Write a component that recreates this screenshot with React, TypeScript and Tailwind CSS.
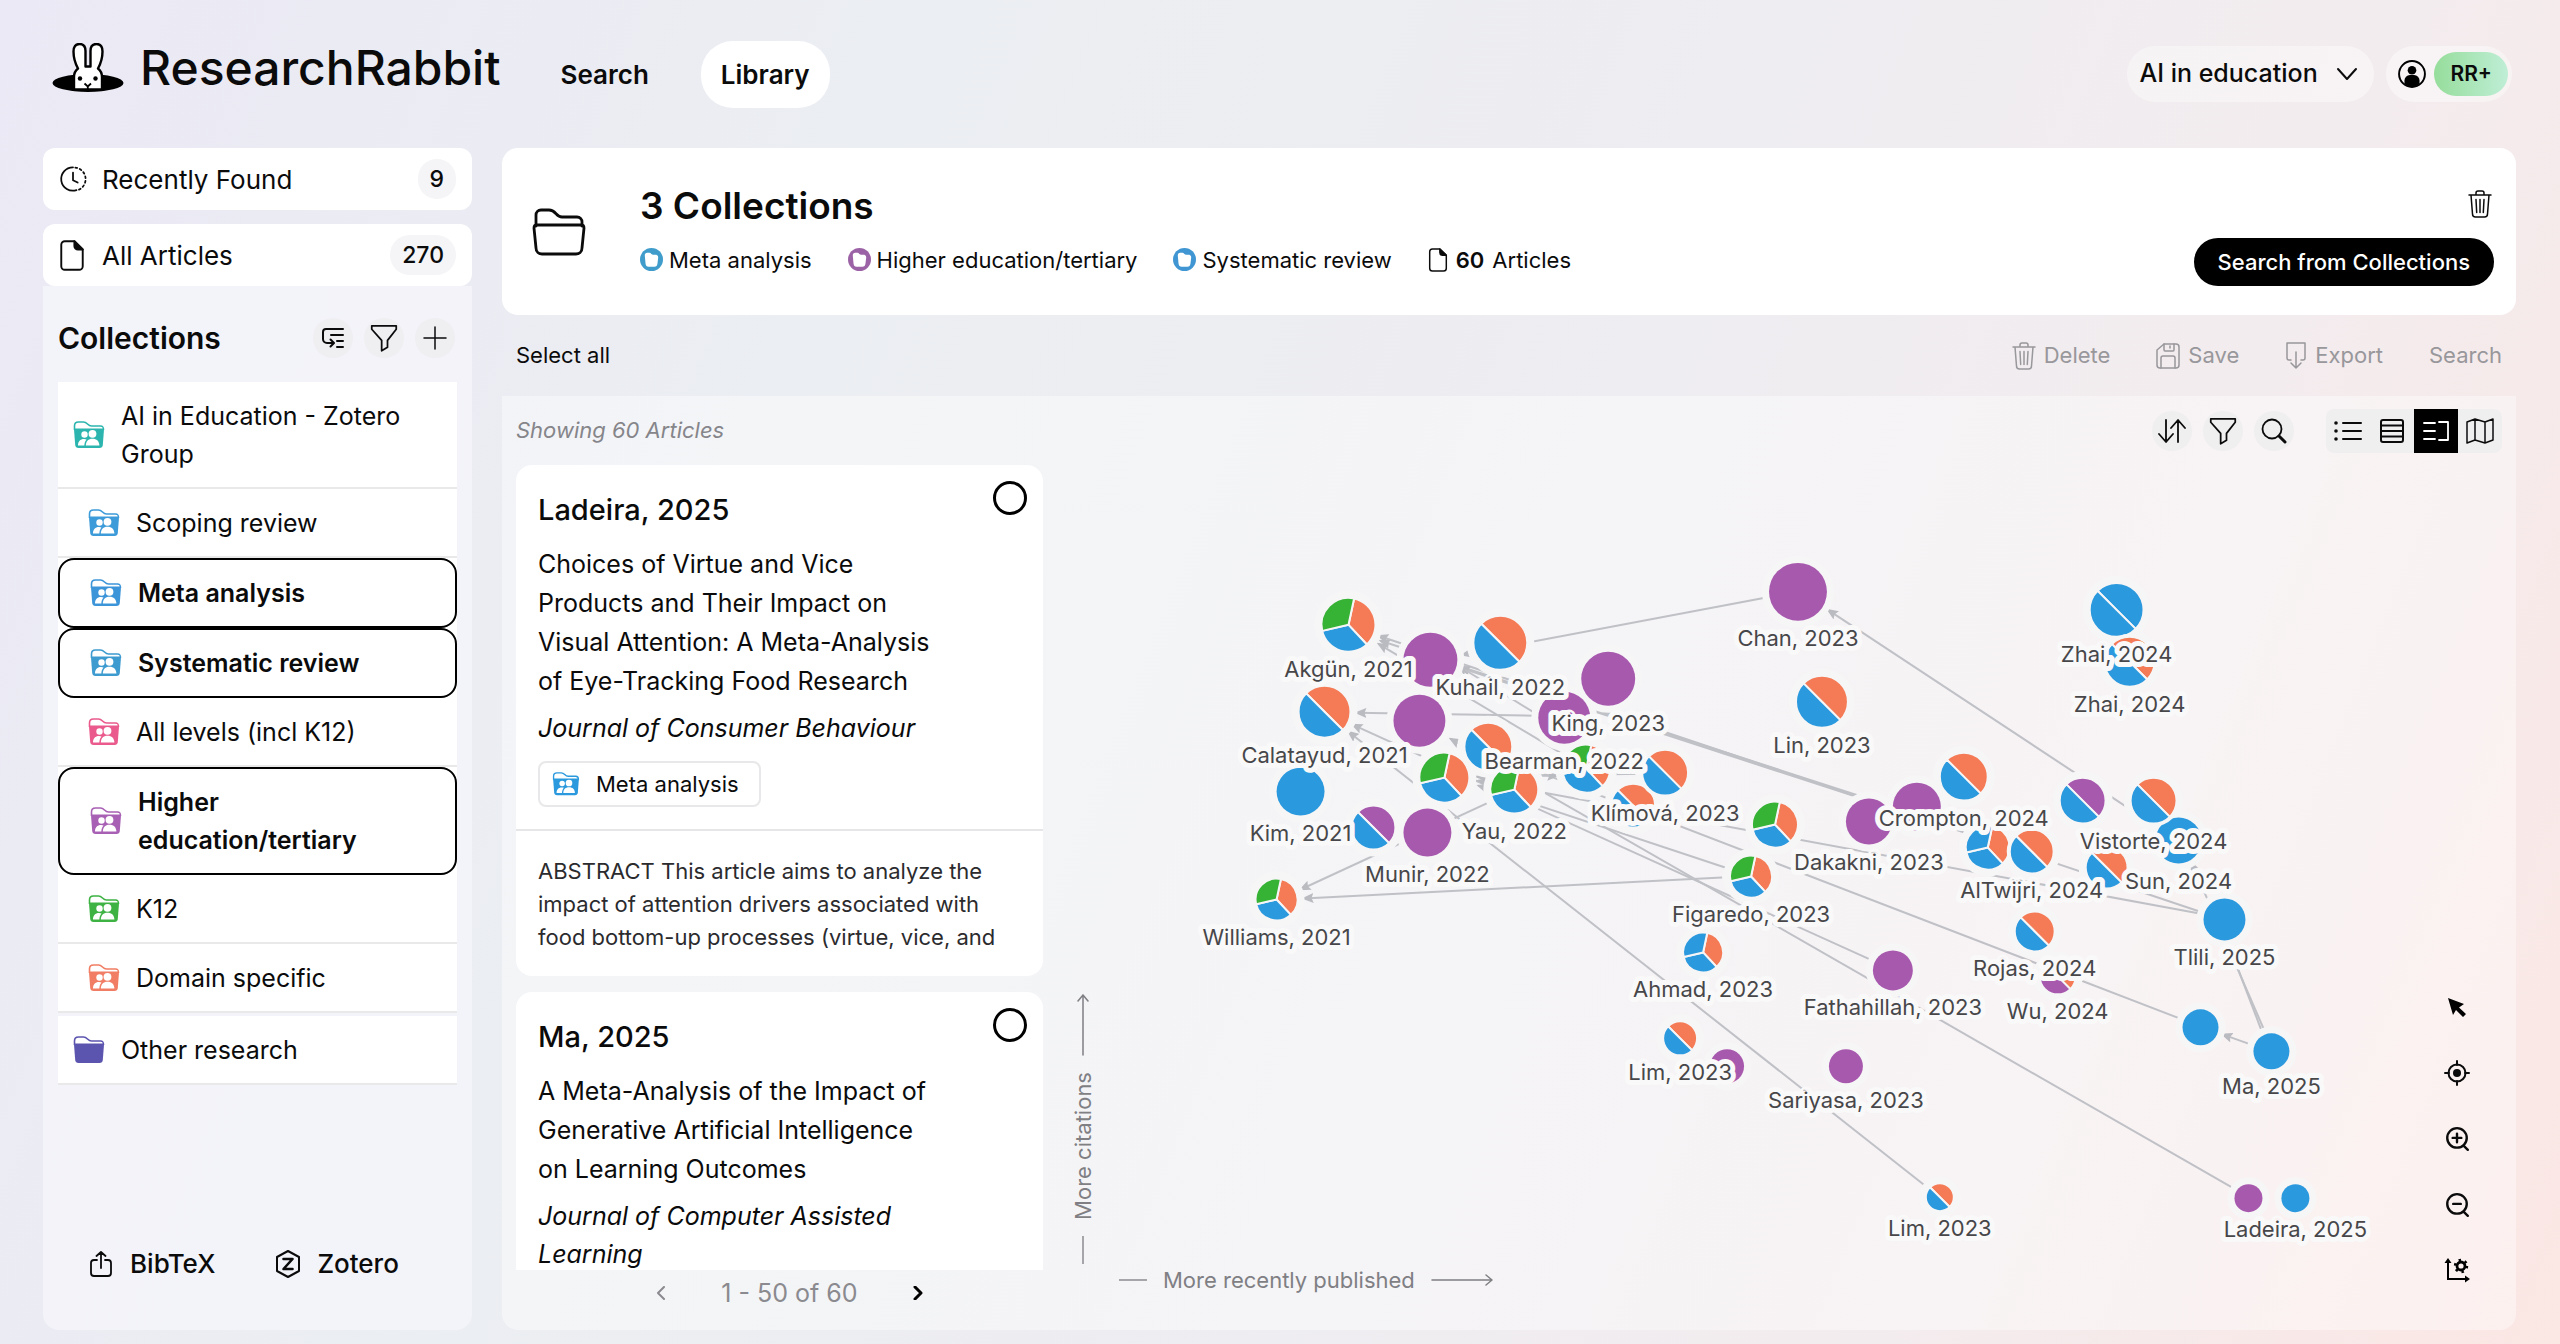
import React from 'react';
import { clsx } from 'clsx';

type IconProps = { className?: string };

type StrokeIconProps = IconProps & {
  box?: string;
  width?: number;
  children: React.ReactNode;
};

function StrokeIcon({ className, box = '0 0 24 24', width = 1.5, children }: StrokeIconProps) {
  return (
    <svg
      className={clsx('shrink-0', className)}
      viewBox={box}
      fill="none"
      stroke="currentColor"
      strokeWidth={width}
      strokeLinecap="round"
      strokeLinejoin="round"
      aria-hidden="true"
    >
      {children}
    </svg>
  );
}

/* ---------- Icons ---------- */

const RabbitLogo = ({ className }: IconProps) => (
  <svg className={className} viewBox="0 0 72 50" aria-hidden="true">
    <ellipse cx="36" cy="40" rx="35.500" ry="9" fill="#000" />
    <path
      d="M22 46.500V34c0-4 1.500-6.500 4-8.500C23 20 21.500 14 21.500 8.500 21.500 4 23.500 1 27.500 1 32 1 33.500 4 33.500 8v15.500h5V8c0-4 1.500-7 6-7 4 0 6 3 6 7.500 0 5.500-1.500 11.500-4.500 17 2.500 2 4 4.500 4 8.500v12.500z"
      fill="#fff"
      stroke="#000"
      strokeWidth="2.400"
      strokeLinejoin="round"
    />
    <circle cx="28" cy="35.500" r="2.200" fill="#000" />
    <circle cx="43.500" cy="35.500" r="2.200" fill="#000" />
    <path d="M32.500 40.500l3.300 3 3.200-3M35.800 43.500V47" fill="none" stroke="#000" strokeWidth="1.800" />
  </svg>
);

const ClockIcon = ({ className }: IconProps) => (
  <StrokeIcon className={className}>
    <path d="M12 2a10 10 0 1 0 3 19.500" />
    <path d="M14 2.200a10 10 0 0 1 3 19" strokeDasharray="1.600 2.400" />
    <path d="M12 6.500V13l4 2" />
  </StrokeIcon>
);

const FileIcon = ({ className }: IconProps) => (
  <StrokeIcon className={className} box="0 0 20 26" width={1.6}>
    <path d="M4 1h8l7 7v14a3 3 0 0 1-3 3H4a3 3 0 0 1-3-3V4a3 3 0 0 1 3-3z" />
    <path d="M12 1v4a3 3 0 0 0 3 3h4z" fill="currentColor" />
  </StrokeIcon>
);

const TreeIcon = ({ className }: IconProps) => (
  <StrokeIcon className={className} width={2}>
    <path d="M22 3H5a3 3 0 0 0-3 3v7a4 4 0 0 0 4 4h6M9.500 13.500L13 17l-3.500 3.500M10 9h12M16 15h6M16 21h6" />
  </StrokeIcon>
);

const FilterIcon = ({ className }: IconProps) => (
  <StrokeIcon className={className}>
    <path d="M1.500 1.500h21v3L15 14v6l-5 3v-9L1.500 4.500z" />
  </StrokeIcon>
);

const PlusIcon = ({ className }: IconProps) => (
  <StrokeIcon className={className}>
    <path d="M12 1v22M1 12h22" />
  </StrokeIcon>
);

const FolderIcon = ({ className }: IconProps) => (
  <StrokeIcon className={className} box="0 0 54 48" width={2.8}>
    <path d="M4 18V7c0-3 2-5 5-5h8c7 0 7 7 13 7h15c3 0 5 2 5 5v4" />
    <path d="M5 17h44c2 0 3 1 3 3l-2 20c0 4-3 6-6 6H10c-3 0-6-2-6-6L2 20c0-2 1-3 3-3z" />
  </StrokeIcon>
);

const TrashIcon = ({ className }: IconProps) => (
  <StrokeIcon className={className} box="0 0 24 28">
    <path d="M1 5h22M8 5V3a2 2 0 0 1 2-2h4a2 2 0 0 1 2 2v2M3 5l1.500 19a3 3 0 0 0 3 3h9a3 3 0 0 0 3-3L21 5M8 9.500l.700 13M12 9.500v13M16 9.500l-.700 13" />
  </StrokeIcon>
);

const SaveIcon = ({ className }: IconProps) => (
  <StrokeIcon className={className} box="0 0 24 26">
    <path d="M8 1h12a3 3 0 0 1 3 3v18a3 3 0 0 1-3 3H4a3 3 0 0 1-3-3V7z" />
    <path d="M8 1v6a1 1 0 0 0 1 1h8a1 1 0 0 0 1-1V1M5 25V15a2 2 0 0 1 2-2h10a2 2 0 0 1 2 2v10M14 3v2" />
  </StrokeIcon>
);

const ExportIcon = ({ className }: IconProps) => (
  <StrokeIcon className={className} box="0 0 22 28">
    <path d="M6 18H4a2 2 0 0 1-2-2V1h18v15a2 2 0 0 1-2 2h-2M11 10v16M6 21l5 5 5-5" />
  </StrokeIcon>
);

const ShareIcon = ({ className }: IconProps) => (
  <StrokeIcon className={className} box="0 0 22 26" width={1.8}>
    <path d="M7 9H4a3 3 0 0 0-3 3v10a3 3 0 0 0 3 3h14a3 3 0 0 0 3-3V12a3 3 0 0 0-3-3h-3M11 17V1M6.500 5L11 1l4.500 4" />
  </StrokeIcon>
);

const ZoteroIcon = ({ className }: IconProps) => (
  <StrokeIcon className={className} box="0 0 26 28" width={2}>
    <path d="M13 1l11 6v14l-11 6-11-6V7z" />
    <path d="M8.500 9h9l-9 10h9" strokeWidth="2.600" />
  </StrokeIcon>
);

const UserIcon = ({ className }: IconProps) => (
  <svg className={className} viewBox="0 0 26 26" aria-hidden="true">
    <circle cx="13" cy="13" r="12" fill="none" stroke="#000" strokeWidth="1.800" />
    <circle cx="13" cy="9.500" r="4" fill="#000" />
    <path d="M6 22v-3a5 5 0 0 1 5-5h4a5 5 0 0 1 5 5v3c-4 4-10 4-14 0z" fill="#000" />
  </svg>
);

const SortIcon = ({ className }: IconProps) => (
  <StrokeIcon className={className} box="0 0 28 26" width={1.8}>
    <path d="M8 2v21M1 16l7 8 7-8M20 24V3M13 10l7-8 7 8" />
  </StrokeIcon>
);

const SearchIcon = ({ className }: IconProps) => (
  <StrokeIcon className={className} box="0 0 26 26" width={1.8}>
    <circle cx="11" cy="11" r="9.500" />
    <path d="M18 18l6 6" strokeWidth="3" />
  </StrokeIcon>
);

const ListIcon = ({ className }: IconProps) => (
  <StrokeIcon className={className} box="0 0 28 24" width={2}>
    <path d="M9 4h18M9 12h18M9 20h18" />
    <path d="M2 4h.010M2 12h.010M2 20h.010" strokeWidth="3.600" />
  </StrokeIcon>
);

const TableIcon = ({ className }: IconProps) => (
  <StrokeIcon className={className} width={2}>
    <rect x="1" y="1" width="22" height="22" rx="2" />
    <path d="M1 6.500h22M1 12h22M1 17.500h22" />
  </StrokeIcon>
);

const SplitIcon = ({ className }: IconProps) => (
  <StrokeIcon className={className} box="0 0 28 24" width={1.8}>
    <path d="M2 4h11M2 12h11M2 20h11M17 3h9v18h-9" />
  </StrokeIcon>
);

const MapIcon = ({ className }: IconProps) => (
  <StrokeIcon className={className} box="0 0 28 28">
    <path d="M1 5l8-3 10 3 8-3v21l-8 3-10-3-8 3zM9 2v21M19 5v21" />
  </StrokeIcon>
);

const TargetIcon = ({ className }: IconProps) => (
  <StrokeIcon className={className} box="0 0 26 26" width={2}>
    <circle cx="13" cy="13" r="8.500" />
    <circle cx="13" cy="13" r="4" fill="currentColor" stroke="none" />
    <path d="M13 1v4M13 21v4M1 13h4M21 13h4" />
  </StrokeIcon>
);

const CursorIcon = ({ className }: IconProps) => (
  <svg className={className} viewBox="0 0 20 20" aria-hidden="true">
    <path d="M1 1l16 6-5 3.500 7 6.500-3 3-7-7-3 5z" fill="#000" />
  </svg>
);

const ZoomInIcon = ({ className }: IconProps) => (
  <StrokeIcon className={className} width={2.2}>
    <circle cx="12" cy="11" r="9" />
    <path d="M18.500 18.500L22 22M8 11h8M12 7v8" />
  </StrokeIcon>
);

const ZoomOutIcon = ({ className }: IconProps) => (
  <StrokeIcon className={className} width={2.2}>
    <circle cx="12" cy="11" r="9" />
    <path d="M18.500 18.500L22 22M8.500 11h7" />
  </StrokeIcon>
);

const AxisIcon = ({ className }: IconProps) => (
  <svg className={className} viewBox="0 0 26 26" aria-hidden="true">
    <path d="M4 4v17h18" fill="none" stroke="#000" strokeWidth="2" />
    <path d="M4 0l3.500 5h-7zM26 21l-5 3.500v-7z" fill="#000" />
    <circle cx="17" cy="8" r="4" fill="none" stroke="#000" strokeWidth="2.800" />
    <circle cx="17" cy="8" r="6" fill="none" stroke="#000" strokeWidth="2.400" strokeDasharray="2.400 3.880" />
  </svg>
);

const ChevronIcon = ({ className }: IconProps) => (
  <StrokeIcon className={className} box="0 0 22 14" width={2}>
    <path d="M2 2l9 10 9-10" />
  </StrokeIcon>
);

type CollectionFolderProps = IconProps & { color: string; shared?: boolean };

function CollectionFolder({ className, color, shared = true }: CollectionFolderProps) {
  return (
    <svg className={clsx('shrink-0', className)} viewBox="0 0 32 28" aria-hidden="true">
      <path
        d="M1.500 9V5c0-2.500 1-4 4-4h5c4 0 4 4 8 4h9c2.500 0 3 1 3 4"
        fill="#fff"
        stroke={color}
        strokeWidth="1.600"
      />
      <path
        d="M2 7.500h28c.700 0 1 .300 1 1L29.800 24c-.200 2-1.300 3-3.300 3h-21c-2 0-3.100-1-3.300-3L1 8.500c0-.700.300-1 1-1z"
        fill={color}
      />
      {shared && (
        <g fill="#fff">
          <circle cx="11.500" cy="13.500" r="3.200" />
          <path d="M5 24.500c0-4 2.200-6.500 6-6.500 1 0 1.800.200 2.500.500-1.300 1.500-2 3.300-2.200 6z" />
          <circle cx="19.500" cy="12.800" r="3.900" />
          <path d="M12.800 24.500c.200-4.300 2.400-6.800 6.700-6.800s6.700 2.500 6.900 6.800z" />
        </g>
      )}
    </svg>
  );
}

const FolderBadge = ({ color }: { color: string }) => (
  <svg className="size-[23px] shrink-0" viewBox="0 0 24 24" aria-hidden="true">
    <circle cx="12" cy="12" r="12" fill={color} />
    <path d="M5 8c0-2 1-3 2.500-3H10c1.500 0 1.500 2 3.500 2H16c2 0 3 1 3 3l-.800 6.500c-.300 2-1.200 3-3.200 3H9c-2 0-2.900-1-3.200-3z" fill="#fff" />
  </svg>
);

/* ---------- Data ---------- */

const BLUE = '#2b99dd';
const ORANGE = '#f47b55';
const GREEN = '#36b235';
const PURPLE = '#a759ae';

const collections = [
  { name: 'AI in Education - Zotero Group', color: '#2cb5ae', nested: false },
  { name: 'Scoping review', color: '#3d9bd9', nested: true },
  { name: 'Meta analysis', color: '#3d95d9', nested: true, selected: true },
  { name: 'Systematic review', color: '#3d9bd0', nested: true, selected: true },
  { name: 'All levels (incl K12)', color: '#ea5a8c', nested: true },
  { name: 'Higher education/tertiary', color: '#a860b4', nested: true, selected: true },
  { name: 'K12', color: '#3eb344', nested: true },
  { name: 'Domain specific', color: '#f17d64', nested: true },
  { name: 'Other research', color: '#5c55b0', nested: false, plain: true },
];

const selectedTags = [
  { name: 'Meta analysis', color: '#3f9ccb' },
  { name: 'Higher education/tertiary', color: '#9c62a6' },
  { name: 'Systematic review', color: '#3f96d2' },
];

const articles = [
  {
    id: 'ladeira',
    label: 'Ladeira, 2025',
    title: 'Choices of Virtue and Vice Products and Their Impact on Visual Attention: A Meta-Analysis of Eye-Tracking Food Research',
    journal: 'Journal of Consumer Behaviour',
    tag: 'Meta analysis',
    abstract:
      'ABSTRACT This article aims to analyze the impact of attention drivers associated with food bottom-up processes (virtue, vice, and',
  },
  {
    id: 'ma',
    label: 'Ma, 2025',
    title: 'A Meta-Analysis of the Impact of Generative Artificial Intelligence on Learning Outcomes',
    journal: 'Journal of Computer Assisted Learning',
  },
];

type GraphNode = { x: number; y: number; r: number; fill: string[]; label?: string };

const BO = [ORANGE, BLUE];
const OBG = [ORANGE, BLUE, GREEN];
const OBB = [ORANGE, BLUE, BLUE];

const nodes: GraphNode[] = [
  { x: 1348, y: 624, r: 27, fill: OBG, label: 'Akgün, 2021' },
  { x: 1430, y: 659, r: 27, fill: [PURPLE] },
  { x: 1500, y: 642, r: 27, fill: BO, label: 'Kuhail, 2022' },
  { x: 1324, y: 711, r: 26, fill: BO, label: 'Calatayud, 2021' },
  { x: 1419, y: 720, r: 26, fill: [PURPLE] },
  { x: 1564, y: 717, r: 26, fill: [PURPLE], label: 'Bearman, 2022' },
  { x: 1608, y: 678, r: 27, fill: [PURPLE], label: 'King, 2023' },
  { x: 1488, y: 746, r: 24, fill: BO },
  { x: 1444, y: 777, r: 25, fill: OBG },
  { x: 1514, y: 789, r: 24, fill: OBG, label: 'Yau, 2022' },
  { x: 1586, y: 768, r: 24, fill: OBG },
  { x: 1633, y: 805, r: 22, fill: BO },
  { x: 1665, y: 772, r: 23, fill: BO, label: 'Klímová, 2023' },
  { x: 1300, y: 791, r: 24, fill: [BLUE], label: 'Kim, 2021' },
  { x: 1373, y: 827, r: 22, fill: [PURPLE, BLUE] },
  { x: 1427, y: 832, r: 24, fill: [PURPLE], label: 'Munir, 2022' },
  { x: 1276, y: 899, r: 21, fill: OBG, label: 'Williams, 2021' },
  { x: 1798, y: 591, r: 29, fill: [PURPLE], label: 'Chan, 2023' },
  { x: 1822, y: 701, r: 26, fill: BO, label: 'Lin, 2023' },
  { x: 2117, y: 609, r: 27, fill: [BLUE, BLUE], label: 'Zhai, 2024' },
  { x: 2130, y: 661, r: 25, fill: BO, label: 'Zhai, 2024' },
  { x: 1964, y: 776, r: 24, fill: BO, label: 'Crompton, 2024' },
  { x: 1917, y: 806, r: 24, fill: [PURPLE] },
  { x: 1869, y: 821, r: 23, fill: [PURPLE], label: 'Dakakni, 2023' },
  { x: 1775, y: 824, r: 23, fill: OBG },
  { x: 1751, y: 876, r: 21, fill: OBG, label: 'Figaredo, 2023' },
  { x: 1703, y: 952, r: 20, fill: OBB, label: 'Ahmad, 2023' },
  { x: 1893, y: 970, r: 20, fill: [PURPLE], label: 'Fathahillah, 2023' },
  { x: 1988, y: 847, r: 22, fill: OBB },
  { x: 2032, y: 851, r: 22, fill: BO, label: 'AlTwijri, 2024' },
  { x: 2083, y: 800, r: 23, fill: [PURPLE, BLUE] },
  { x: 2107, y: 867, r: 21, fill: BO },
  { x: 2179, y: 840, r: 23, fill: [BLUE], label: 'Sun, 2024' },
  { x: 2154, y: 800, r: 23, fill: BO, label: 'Vistorte, 2024' },
  { x: 2058, y: 976, r: 18, fill: [ORANGE, PURPLE], label: 'Wu, 2024' },
  { x: 2035, y: 931, r: 20, fill: BO, label: 'Rojas, 2024' },
  { x: 2225, y: 919, r: 21, fill: [BLUE], label: 'Tlili, 2025' },
  { x: 2201, y: 1027, r: 18, fill: [BLUE] },
  { x: 2272, y: 1051, r: 18, fill: [BLUE], label: 'Ma, 2025' },
  { x: 1727, y: 1066, r: 17, fill: [PURPLE] },
  { x: 1680, y: 1038, r: 17, fill: BO, label: 'Lim, 2023' },
  { x: 1846, y: 1066, r: 17, fill: [PURPLE], label: 'Sariyasa, 2023' },
  { x: 1940, y: 1197, r: 14, fill: BO, label: 'Lim, 2023' },
  { x: 2249, y: 1198, r: 14, fill: [PURPLE] },
  { x: 2296, y: 1198, r: 14, fill: [BLUE], label: 'Ladeira, 2025' },
];

// from x, from y, to x, to y; the arrow head sits on the second point
const edges = [
  [1765, 597, 1462, 654],
  [2172, 836, 1828, 609],
  [1534, 715, 1356, 712],
  [1870, 959, 1352, 724],
  [1926, 1186, 1348, 731],
  [2232, 1187, 1450, 738],
  [1725, 867, 1478, 785],
  [1722, 877, 1303, 898],
  [1488, 802, 1300, 889],
  [1859, 795, 1380, 640],
  [2200, 911, 1378, 635],
  [1565, 755, 1378, 643],
  [1859, 797, 1460, 667],
  [1534, 712, 1458, 665],
  [2200, 913, 1478, 780],
  [2180, 1018, 1478, 748],
  [1640, 773, 1476, 776],
  [1540, 775, 1557, 775],
  [2264, 1028, 2192, 862],
  [2262, 1030, 2230, 946],
  [2251, 1044, 2223, 1034],
];

const mapTools = [
  { name: 'Select', icon: CursorIcon },
  { name: 'Center', icon: TargetIcon },
  { name: 'Zoom in', icon: ZoomInIcon },
  { name: 'Zoom out', icon: ZoomOutIcon },
  { name: 'Axis settings', icon: AxisIcon },
];

/* ---------- Graph ---------- */

const polar = (n: GraphNode, deg: number) => {
  const a = (deg * Math.PI) / 180;
  return `${n.x + n.r * Math.cos(a)} ${n.y + n.r * Math.sin(a)}`;
};

// first angle of each slice, clockwise from three o'clock
const sliceAngles = (count: number) => (count === 3 ? [-78, 47, 167, 282] : [-135, 45, 225]);

function PieNode({ node }: { node: GraphNode }) {
  const { x, y, r, fill } = node;
  const angles = sliceAngles(fill.length);

  return (
    <g>
      <circle cx={x} cy={y} r={r + 3} fill="#f7f6f7" />
      {fill.length === 1 ? (
        <circle cx={x} cy={y} r={r} fill={fill[0]} />
      ) : (
        fill.map((color, i) => (
          <path
            key={i}
            d={`M${x} ${y}L${polar(node, angles[i])}A${r} ${r} 0 0 1 ${polar(node, angles[i + 1])}Z`}
            fill={color}
            stroke="#f7f6f7"
            strokeWidth="2"
          />
        ))
      )}
    </g>
  );
}

function CitationGraph() {
  return (
    <svg className="h-full w-full" viewBox="1043 464 1473 866" role="img" aria-label="Citation map">
      <defs>
        <marker id="arrow" viewBox="0 0 12 10" markerWidth="12" markerHeight="10" refX="10" refY="5" orient="auto" markerUnits="userSpaceOnUse">
          <path d="M0 0L12 5L0 10L2 5z" fill="#b9bbc1" />
        </marker>
      </defs>
      {edges.map(([x1, y1, x2, y2], i) => (
        <line key={i} x1={x1} y1={y1} x2={x2} y2={y2} stroke="#bfc1c6" strokeWidth="2" markerEnd="url(#arrow)" />
      ))}
      {nodes.map((n, i) => (
        <circle key={i} cx={n.x} cy={n.y} r={n.r + 7} fill="#f7f6f7" />
      ))}
      {nodes.map((n, i) => (
        <PieNode key={i} node={n} />
      ))}
      {nodes.map(
        (n, i) =>
          n.label && (
            <text
              key={i}
              x={n.x}
              y={n.y + n.r + 25}
              textAnchor="middle"
              className="fill-[#47474a] stroke-[#faf9f9] stroke-[10px] text-[22px] [paint-order:stroke] [stroke-linejoin:round]"
            >
              {n.label}
            </text>
          ),
      )}
    </svg>
  );
}

/* ---------- Page parts ---------- */

function Header() {
  return (
    <header className="flex items-center pt-10 pr-12 pb-10 pl-[52px]">
      <a href="#home" className="flex items-center gap-4 pb-3">
        <RabbitLogo className="h-[50px] w-[72px]" />
        <span className="text-[48px] leading-[56px] font-medium">ResearchRabbit</span>
      </a>
      <nav className="ml-10 flex items-center gap-8 text-[26px] leading-[35px] font-semibold">
        <a href="#search" className="px-5 py-4">Search</a>
        <a href="#library" className="rounded-[32px] bg-white px-5 py-4">Library</a>
      </nav>
      <div className="ml-auto flex items-center gap-3">
        <div className="relative flex items-center rounded-full bg-white/40">
          <select aria-label="Workspace" className="h-14 appearance-none bg-transparent pr-14 pl-3 text-[25px] font-medium">
            <option>AI in education</option>
          </select>
          <ChevronIcon className="pointer-events-none absolute right-4 h-[14px] w-[22px]" />
        </div>
        <button aria-label="Account" className="flex h-14 items-center gap-2 rounded-full bg-white/40 pr-1 pl-3">
          <UserIcon className="size-7" />
          <span className="rounded-full bg-linear-to-r from-[#96dd9b] to-[#bfeed6] px-4 py-2 text-[21px] leading-[28px] font-semibold">
            RR+
          </span>
        </button>
      </div>
    </header>
  );
}

function CountLink({ icon, label, count }: { icon: React.ReactNode; label: string; count: number }) {
  return (
    <a href="#articles" className="flex h-[62px] shrink-0 items-center rounded-xl bg-white pr-4 pl-4 text-[26px]">
      <span className="flex w-[43px]">{icon}</span>
      {label}
      <span className="ml-auto rounded-full bg-[#f5f4f6] px-3 text-[23px] leading-[40px] font-medium">{count}</span>
    </a>
  );
}

function Sidebar() {
  return (
    <aside className="flex w-[429px] shrink-0 flex-col">
      <div className="flex flex-col gap-[14px]">
        <CountLink icon={<ClockIcon className="size-[28px]" />} label="Recently Found" count={9} />
        <CountLink icon={<FileIcon className="h-[31px] w-[26px]" />} label="All Articles" count={270} />
      </div>
      <section className="flex min-h-0 flex-1 flex-col rounded-b-2xl bg-[#f8f8fd]/60 px-[15px]">
        <div className="flex items-center pt-8 pb-6">
          <h2 className="text-[30px] leading-[40px] font-semibold">Collections</h2>
          <div className="ml-auto flex gap-[11px] pr-[2px]">
            <button aria-label="Expand tree" className="grid size-10 place-items-center rounded-full bg-[#efeff2]">
              <TreeIcon className="size-6" />
            </button>
            <button aria-label="Filter collections" className="grid size-10 place-items-center rounded-full bg-[#efeff2]">
              <FilterIcon className="size-7" />
            </button>
            <button aria-label="Add collection" className="grid size-10 place-items-center rounded-full bg-[#efeff2]">
              <PlusIcon className="size-6" />
            </button>
          </div>
        </div>
        <ul>
          {collections.map((c) => (
            <li key={c.name} className={clsx('bg-white', c.plain && 'mt-[3px]')}>
              <button
                className={clsx(
                  'flex w-full items-center gap-4 py-[14px] text-left text-[25px] leading-[38px]',
                  c.nested ? 'pl-[30px]' : 'pl-[15px]',
                  c.name.includes('/') ? 'pr-20' : 'pr-8',
                  c.selected
                    ? 'rounded-2xl border-2 border-black pl-7 font-semibold'
                    : 'border-t border-b-2 border-t-transparent border-b-[#e9e9ea]',
                )}
              >
                <CollectionFolder className="h-7 w-8" color={c.color} shared={!c.plain} />
                {c.name}
              </button>
            </li>
          ))}
        </ul>
        <div className="mt-auto flex gap-[60px] px-8 pb-[46px] text-[26px] leading-[40px] font-medium">
          <button className="flex items-center gap-[18px]">
            <ShareIcon className="h-[26px] w-[22px]" />
            BibTeX
          </button>
          <button className="flex items-center gap-4">
            <ZoteroIcon className="h-7 w-[26px]" />
            Zotero
          </button>
        </div>
      </section>
    </aside>
  );
}

function CollectionsHeader() {
  return (
    <section className="flex h-[167px] shrink-0 items-center rounded-2xl bg-white pr-[22px] pl-[30px]">
      <FolderIcon className="h-[48px] w-[54px]" />
      <div className="ml-[54px] flex flex-col gap-4">
        <h1 className="text-[37px] leading-[40px] font-semibold">3 Collections</h1>
        <div className="flex items-center gap-9 text-[22px] leading-[36px]">
          {selectedTags.map((t) => (
            <span key={t.name} className="flex items-center gap-[6px]">
              <FolderBadge color={t.color} />
              {t.name}
            </span>
          ))}
          <span className="flex items-center gap-2">
            <FileIcon className="h-6 w-[20px]" />
            <b className="font-semibold">60</b> Articles
          </span>
        </div>
      </div>
      <div className="ml-auto flex flex-col items-end gap-5 pt-3">
        <button aria-label="Delete collections" className="mr-[2px]">
          <TrashIcon className="h-7 w-6" />
        </button>
        <button className="rounded-full bg-black px-6 text-[22px] leading-[48px] font-medium text-white">
          Search from Collections
        </button>
      </div>
    </section>
  );
}

function Toolbar() {
  return (
    <div className="flex h-[81px] shrink-0 items-center pr-[14px] pl-[14px] text-[22px]">
      <button>Select all</button>
      <div className="ml-auto flex items-center gap-[46px] text-[#98979b]">
        <button disabled className="flex items-center gap-2">
          <TrashIcon className="h-7 w-6" />
          Delete
        </button>
        <button disabled className="flex items-center gap-2">
          <SaveIcon className="h-[26px] w-6" />
          Save
        </button>
        <button disabled className="flex items-center gap-2">
          <ExportIcon className="h-7 w-[22px]" />
          Export
        </button>
        <button disabled>Search</button>
      </div>
    </div>
  );
}

function ViewControls() {
  return (
    <div className="ml-auto flex items-center">
      <div className="flex gap-[11px]">
        <button aria-label="Sort" className="grid size-10 place-items-center rounded-full bg-[#f0eff0]">
          <SortIcon className="size-7" />
        </button>
        <button aria-label="Filter" className="grid size-10 place-items-center rounded-full bg-[#f0eff0]">
          <FilterIcon className="size-7" />
        </button>
        <button aria-label="Search articles" className="grid size-10 place-items-center rounded-full bg-[#f0eff0]">
          <SearchIcon className="size-[26px]" />
        </button>
      </div>
      <div className="ml-8 flex rounded-lg bg-[#f0eff0]">
        <button aria-label="List view" className="grid size-[44px] place-items-center">
          <ListIcon className="h-6 w-7" />
        </button>
        <button aria-label="Table view" className="grid size-[44px] place-items-center">
          <TableIcon className="size-6" />
        </button>
        <button aria-label="Split view" aria-pressed="true" className="grid size-[44px] place-items-center bg-black text-white">
          <SplitIcon className="h-6 w-7" />
        </button>
        <button aria-label="Map view" className="grid size-[44px] place-items-center">
          <MapIcon className="size-7" />
        </button>
      </div>
    </div>
  );
}

function ArticleCard({ article }: { article: (typeof articles)[number] }) {
  return (
    <article className="relative shrink-0 rounded-2xl bg-white">
      <input
        type="checkbox"
        aria-label={`Select ${article.label}`}
        className="absolute top-4 right-4 size-[34px] appearance-none rounded-full border-3 border-black"
      />
      <div className="px-[22px] pt-[26px] pb-[22px]">
        <h3 className="text-[29px] leading-[38px] font-medium">{article.label}</h3>
        <p className="mt-4 max-w-[410px] text-[25px] leading-[39px]">{article.title}</p>
        <p className="mt-2 max-w-[410px] text-[25px] leading-[38px] italic">{article.journal}</p>
        {article.tag && (
          <span className="mt-[14px] inline-flex h-[46px] items-center gap-4 rounded-lg border-2 border-[#e8e8ea] pr-5 pl-3 text-[22px]">
            <CollectionFolder className="h-6 w-7" color={BLUE} />
            {article.tag}
          </span>
        )}
      </div>
      {article.abstract && (
        <p className="border-t-2 border-[#e6e6e9] px-[22px] pt-6 pb-[22px] text-[22px] leading-[33px] text-[#2b2b2e]">
          {article.abstract}
        </p>
      )}
    </article>
  );
}

function ArticleList() {
  return (
    <div className="flex w-[527px] shrink-0 flex-col">
      <div className="flex min-h-0 flex-1 flex-col gap-4 overflow-hidden">
        {articles.map((a) => (
          <ArticleCard key={a.id} article={a} />
        ))}
      </div>
      <div className="flex h-[60px] items-start justify-center gap-13 pt-1 pl-5 text-[25px] leading-[38px] text-[#8a8a8f]">
        <button aria-label="Previous page" disabled className="grid h-[38px] w-4 place-items-center">
          <StrokeIcon className="h-[14px] w-[10px]" box="0 0 10 14" width={2}>
            <path d="M8 1L2 7l6 6" />
          </StrokeIcon>
        </button>
        <span>1 - 50 of 60</span>
        <button aria-label="Next page" className="grid h-[38px] w-4 place-items-center text-black">
          <StrokeIcon className="h-[14px] w-[10px]" box="0 0 10 14" width={3}>
            <path d="M2 1l6 6-6 6" />
          </StrokeIcon>
        </button>
      </div>
    </div>
  );
}

function GraphPanel() {
  return (
    <div className="relative min-w-0 flex-1">
      <CitationGraph />
      <div className="absolute bottom-[66px] left-6 flex flex-col items-center gap-4 text-[22px] leading-[32px] text-[#7f7f84]">
        <StrokeIcon className="h-[62px] w-3" box="0 0 12 62">
          <path d="M6 61V1M1 7l5-6 5 6" />
        </StrokeIcon>
        <span className="rotate-180 [writing-mode:vertical-rl]">More citations</span>
        <span className="h-7 w-[2px] bg-[#a5a5aa]" />
      </div>
      <div className="absolute bottom-[34px] left-[76px] flex items-center gap-4 text-[22px] leading-[32px] text-[#7f7f84]">
        <span className="h-[2px] w-7 bg-[#a5a5aa]" />
        More recently published
        <StrokeIcon className="h-3 w-[62px]" box="0 0 62 12">
          <path d="M1 6h60M55 1l6 5-6 5" />
        </StrokeIcon>
      </div>
      <div className="absolute right-[42px] bottom-[42px] flex flex-col gap-[32px]">
        {mapTools.map((t) => {
          const Icon = t.icon;
          return (
            <button key={t.name} aria-label={t.name} className="grid size-[34px] place-items-center">
              <Icon className={t.icon === CursorIcon ? 'size-5' : 'size-[26px]'} />
            </button>
          );
        })}
      </div>
    </div>
  );
}

export default function App() {
  return (
    <div className="flex h-screen flex-col overflow-hidden bg-[linear-gradient(112deg,#ebe9f5_0%,#ebeef2_30%,#eeedf1_58%,#f3ecee_78%,#fbe7e4_100%)] font-['Inter',sans-serif] text-[#0b0b0c]">
      <Header />
      <div className="flex min-h-0 flex-1 gap-[30px] pr-11 pb-[14px] pl-[43px]">
        <Sidebar />
        <main className="flex min-w-0 flex-1 flex-col">
          <CollectionsHeader />
          <Toolbar />
          <section className="flex min-h-0 flex-1 flex-col rounded-b-2xl bg-white/40">
            <div className="flex h-[69px] shrink-0 items-center pr-[14px] pl-[14px]">
              <p className="text-[22px] text-[#85858a] italic">Showing 60 Articles</p>
              <ViewControls />
            </div>
            <div className="flex min-h-0 flex-1 pl-[14px]">
              <ArticleList />
              <GraphPanel />
            </div>
          </section>
        </main>
      </div>
    </div>
  );
}
